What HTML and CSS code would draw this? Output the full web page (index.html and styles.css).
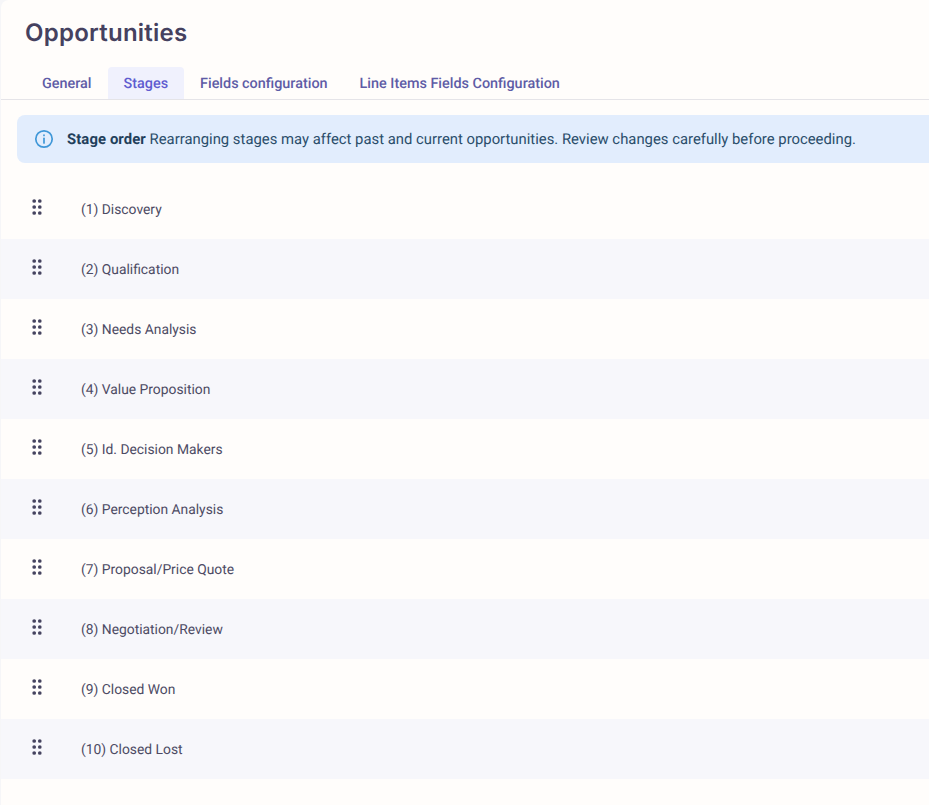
FILE: index.html
```html
<!DOCTYPE html>
<html lang="en">
<head>
<meta charset="utf-8">
<title>Opportunities</title>
<link rel="stylesheet" href="styles.css">
</head>
<body>
<main class="page">
  <h1 class="title">Opportunities</h1>
  <nav class="tabs">
    <a class="tab">General</a>
    <a class="tab active">Stages</a>
    <a class="tab">Fields configuration</a>
    <a class="tab">Line Items Fields Configuration</a>
  </nav>
  <div class="banner">
    <svg class="info" viewBox="0 0 20 20" width="20" height="20" fill="none" stroke="#3f97d8" stroke-width="1.7" stroke-linecap="round"><circle cx="10" cy="10" r="8.2"/><path d="M10 9.3v4.6"/><path d="M10 6.1v.3"/></svg>
    <p class="banner-text"><strong>Stage order</strong> Rearranging stages may affect past and current opportunities. Review changes carefully before proceeding.</p>
  </div>
  <ul class="stages">
    <li class="stage"><svg class="grip" viewBox="0 0 10 16" width="10" height="16"><use href="#dots"/></svg><span class="stage-name">(1) Discovery</span></li>
    <li class="stage"><svg class="grip" viewBox="0 0 10 16" width="10" height="16"><use href="#dots"/></svg><span class="stage-name">(2) Qualification</span></li>
    <li class="stage"><svg class="grip" viewBox="0 0 10 16" width="10" height="16"><use href="#dots"/></svg><span class="stage-name">(3) Needs Analysis</span></li>
    <li class="stage"><svg class="grip" viewBox="0 0 10 16" width="10" height="16"><use href="#dots"/></svg><span class="stage-name">(4) Value Proposition</span></li>
    <li class="stage"><svg class="grip" viewBox="0 0 10 16" width="10" height="16"><use href="#dots"/></svg><span class="stage-name">(5) Id. Decision Makers</span></li>
    <li class="stage"><svg class="grip" viewBox="0 0 10 16" width="10" height="16"><use href="#dots"/></svg><span class="stage-name">(6) Perception Analysis</span></li>
    <li class="stage"><svg class="grip" viewBox="0 0 10 16" width="10" height="16"><use href="#dots"/></svg><span class="stage-name">(7) Proposal/Price Quote</span></li>
    <li class="stage"><svg class="grip" viewBox="0 0 10 16" width="10" height="16"><use href="#dots"/></svg><span class="stage-name">(8) Negotiation/Review</span></li>
    <li class="stage"><svg class="grip" viewBox="0 0 10 16" width="10" height="16"><use href="#dots"/></svg><span class="stage-name">(9) Closed Won</span></li>
    <li class="stage"><svg class="grip" viewBox="0 0 10 16" width="10" height="16"><use href="#dots"/></svg><span class="stage-name">(10) Closed Lost</span></li>
  </ul>
</main>
<svg class="defs" width="0" height="0" aria-hidden="true">
  <defs>
    <g id="dots" fill="#45435f">
      <circle cx="2.2" cy="2" r="1.85"/><circle cx="7.8" cy="2" r="1.85"/>
      <circle cx="2.2" cy="8" r="1.85"/><circle cx="7.8" cy="8" r="1.85"/>
      <circle cx="2.2" cy="14" r="1.85"/><circle cx="7.8" cy="14" r="1.85"/>
    </g>
  </defs>
</svg>
</body>
</html>
```
FILE: styles.css
```css
* { box-sizing: border-box; }
html, body { margin: 0; padding: 0; }
body {
  background: #f6f6f8;
  font-family: Roboto, "Liberation Sans", sans-serif;
  color: #45435f;
  overflow: hidden;
  height: 805px;
  text-rendering: geometricPrecision;
}
.page {
  margin-left: 1px;
  height: 805px;
  background: #fffdfb;
  border-top-left-radius: 8px;
}
.title {
  margin: 0;
  padding: 18px 0 0 24px;
  height: 67px;
  font-family: Inter, Roboto, sans-serif;
  font-size: 24px;
  line-height: 29px;
  font-weight: 600;
  letter-spacing: 0.25px;
  color: #45415f;
}
.tabs {
  display: flex;
  height: 33px;
  padding-left: 25px;
  border-bottom: 1px solid #e5e4e8;
}
.tab {
  padding: 0 16px;
  height: 32px;
  line-height: 33px;
  font-size: 14.4px;
  font-weight: 500;
  color: #5e5ca6;
  border-radius: 4px 4px 0 0;
}
.tab.active { background: #f0f1fd; color: #5f5cd0; }
.banner {
  display: flex;
  align-items: center;
  gap: 13px;
  height: 48px;
  margin: 15px 0 16px 16px;
  padding-left: 17px;
  background: #e2edfd;
  border-radius: 8px 0 0 8px;
}
.info { flex: none; }
.banner-text {
  margin: 0;
  font-size: 14.85px;
  line-height: 20px;
  color: #2b4e6b;
  white-space: nowrap;
}
.banner-text strong { font-weight: 700; letter-spacing: 0.1px; color: #1f3f5b; }
.stages { margin: 0; padding: 0; list-style: none; }
.stage {
  display: flex;
  align-items: center;
  height: 60px;
  padding-left: 31px;
  font-size: 13.85px;
  color: #4d4b64;
}
.stage:nth-child(even) { background: #f7f7fb; }
.stage-name { padding-top: 2px; }
.grip { flex: none; margin-top: -4px; margin-right: 39px; }
.defs { position: absolute; }
```
